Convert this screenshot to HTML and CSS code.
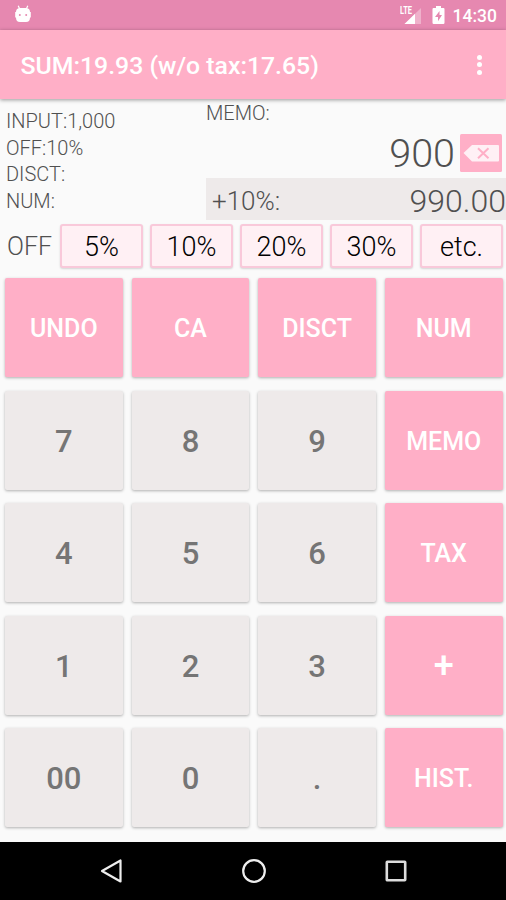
FILE: index.html
```html
<!doctype html>
<html>
<head>
<meta charset="utf-8">
<title>Discount Calculator</title>
<link rel="stylesheet" href="styles.css">
</head>

<body>
	<div class="status">
		<svg class="droid" width="18" height="18" viewBox="0 0 18 18">
			<path d="M4.200 0.800L5.700 4M13.800 0.800L12.300 4" stroke="#fff" stroke-width="1.200"/>
			<path fill="#fff" d="M2 7Q2 3.400 5.500 3h7Q16 3.400 16 7h.8v5.500H16Q16 17 12 17H6Q2 17 2 12.500h-.8V7z"/>
			<circle cx="5.800" cy="10" r="1" fill="#e688b0"/>
			<circle cx="12.200" cy="10" r="1" fill="#e688b0"/>
		</svg>
		<svg class="signal" width="23" height="20" viewBox="0 0 23 20">
			<path d="M21 3V19H4.500z" fill="#fff" opacity=".35"/>
			<path d="M15 8.800V19H4.500z" fill="#fff"/>
			<text class="lte" x="0" y="9" textLength="12" lengthAdjust="spacingAndGlyphs">LTE</text>
		</svg>
		<svg class="battery" width="13" height="19" viewBox="0 0 13 19">
			<path fill="#fff" d="M4 0h5v2h2.500Q12.500 2 12.500 3.200v13.600Q12.500 18 11.300 18H1.700Q.5 18 .5 16.800V3.200Q.5 2 1.500 2H4z"/>
			<path fill="#e688b0" d="M7.500 5L3 11h3v4.200L10 9H7.500z"/>
		</svg>
		<span class="clock">14:30</span>
	</div>
	<div class="bar">
		<h1>SUM:19.93 (w/o tax:17.65)</h1>
		<div class="more"><i></i><i></i><i></i></div>
	</div>
	<div class="display">
		<ul class="info">
			<li>INPUT:1,000</li>
			<li>OFF:10%</li>
			<li>DISCT:</li>
			<li>NUM:</li>
		</ul>
		<div class="result">
			<div class="memo">MEMO:</div>
			<div class="value">
				<span>900</span>
				<svg class="del" width="42" height="38" viewBox="0 0 42 38">
					<rect width="42" height="38" rx="1.500" fill="#ffafc7"/>
					<path fill="#fff0f5" d="M3.500 19L12 11h26q1 0 1 1v14.500q0 1-1 1H12z"/>
					<path d="M18 14.200l10.500 10M28.500 14.200L18 24.200" stroke="#ffafc7" stroke-width="2"/>
				</svg>
			</div>
			<div class="tax"><span>+10%:</span><b>990.00</b></div>
		</div>
	</div>
	<div class="off">
		<span>OFF</span>
		<div class="chip">5%</div>
		<div class="chip">10%</div>
		<div class="chip">20%</div>
		<div class="chip">30%</div>
		<div class="chip">etc.</div>
	</div>
	<div class="keys">
		<div class="key pink">UNDO</div>
		<div class="key pink">CA</div>
		<div class="key pink">DISCT</div>
		<div class="key pink">NUM</div>
		<div class="key">7</div>
		<div class="key">8</div>
		<div class="key">9</div>
		<div class="key pink">MEMO</div>
		<div class="key">4</div>
		<div class="key">5</div>
		<div class="key">6</div>
		<div class="key pink">TAX</div>
		<div class="key">1</div>
		<div class="key">2</div>
		<div class="key">3</div>
		<div class="key pink plus">+</div>
		<div class="key">00</div>
		<div class="key">0</div>
		<div class="key">.</div>
		<div class="key pink">HIST.</div>
	</div>
	<div class="nav">
		<svg width="24" height="26" viewBox="0 0 24 26"><path d="M2 13L20.500 2.500v21z" fill="none" stroke="#eee" stroke-width="2.200" stroke-linejoin="round"/></svg>
		<svg width="26" height="26" viewBox="0 0 26 26"><circle cx="13" cy="13" r="10.800" fill="none" stroke="#eee" stroke-width="2.200"/></svg>
		<svg width="24" height="26" viewBox="0 0 24 26"><rect x="2.800" y="3.800" width="18.400" height="18.400" rx=".5" fill="none" stroke="#ddd" stroke-width="2.600"/></svg>
	</div>
</body>
</html>
```
FILE: styles.css
```css
*{ margin:0; padding:0; box-sizing:border-box; list-style:none; }
body{ width:506px; height:900px; overflow:hidden; background:#fafafa; color:#505050; font-family:Roboto, "Liberation Sans", sans-serif; display:flex; flex-direction:column; }
svg{ display:block; flex:none; }

/* 状态栏 */
.status{ height:30px; flex:none; background:#e688b0; display:flex; align-items:center; padding:0 9px 0 14px; }
.droid{ margin-bottom:2px; }
.signal{ margin-left:auto; margin-bottom:1px; }
.lte{ font-size:10px; font-weight:700; fill:#fff; }
.battery{ margin-left:9px; }
.clock{ margin-left:8px; font-size:17.5px; font-weight:500; line-height:20px; color:#fff; padding-top:2px; }

/* 标题栏 */
.bar{ height:69px; flex:none; background:#ffafc7; display:flex; align-items:center; justify-content:space-between; padding:3px 24px 0 20.5px; box-shadow:0 1px 4px rgba(0,0,0,.4); position:relative; }
.bar h1{ font-size:24.8px; font-weight:500; line-height:30px; color:#fff; white-space:nowrap; }
.more{ display:flex; flex-direction:column; gap:2.5px; margin-bottom:3px; }
.more i{ width:5px; height:5px; border-radius:50%; background:#fff; }

/* 显示区 */
.display{ height:121px; flex:none; display:flex; }
.info{ width:206px; padding:9px 0 0 6px; font-size:20px; font-weight:300; line-height:26.700px; }
.result{ flex:1; display:flex; flex-direction:column; }
.memo{ height:29px; font-size:20px; font-weight:300; line-height:29px; }
.value{ flex:1; display:flex; align-items:center; justify-content:flex-end; gap:5px; padding-right:4px; font-size:39.5px; font-weight:300; line-height:46px; }
.value span{ padding-top:2px; }
.tax{ height:42px; background:#eeeaea; display:flex; align-items:center; justify-content:space-between; padding-left:6px; font-size:26px; font-weight:300; }
.tax span{ padding-top:3px; }
.tax b{ font-size:32px; font-weight:300; line-height:42px; padding-top:3px; }

/* 折扣按钮 */
.off{ height:58px; flex:none; display:flex; gap:7px; padding:4px 3px 10px 7px; font-size:27px; font-weight:300; line-height:43px; }
.off span{ width:46px; font-size:25px; line-height:46px; }
.chip{ flex:1; height:44px; border:2px solid #f9c9da; border-radius:3px; background:#fff0f4; color:#000; text-align:center; box-shadow:0 1px 2px rgba(0,0,0,.15); }

/* 键盘 */
.keys{ height:564px; flex:none; display:grid; grid-template-columns:repeat(4, 1fr); grid-template-rows:repeat(5, 99px); gap:13.500px 9px; padding:0 3.500px 0 5px; }
.key{ display:flex; align-items:center; justify-content:center; border-radius:2px; background:#eeeaea; color:#757575; font-size:31px; font-weight:500; padding-top:2px; box-shadow:0 1px 3px rgba(0,0,0,.3); }
.pink{ background:#ffafc7; color:#fff; font-size:25px; }
.plus{ font-size:36px; }

/* 导航栏 */
.nav{ height:58px; flex:none; background:#000; display:flex; justify-content:center; align-items:center; gap:117px; padding-left:2px; }
```
